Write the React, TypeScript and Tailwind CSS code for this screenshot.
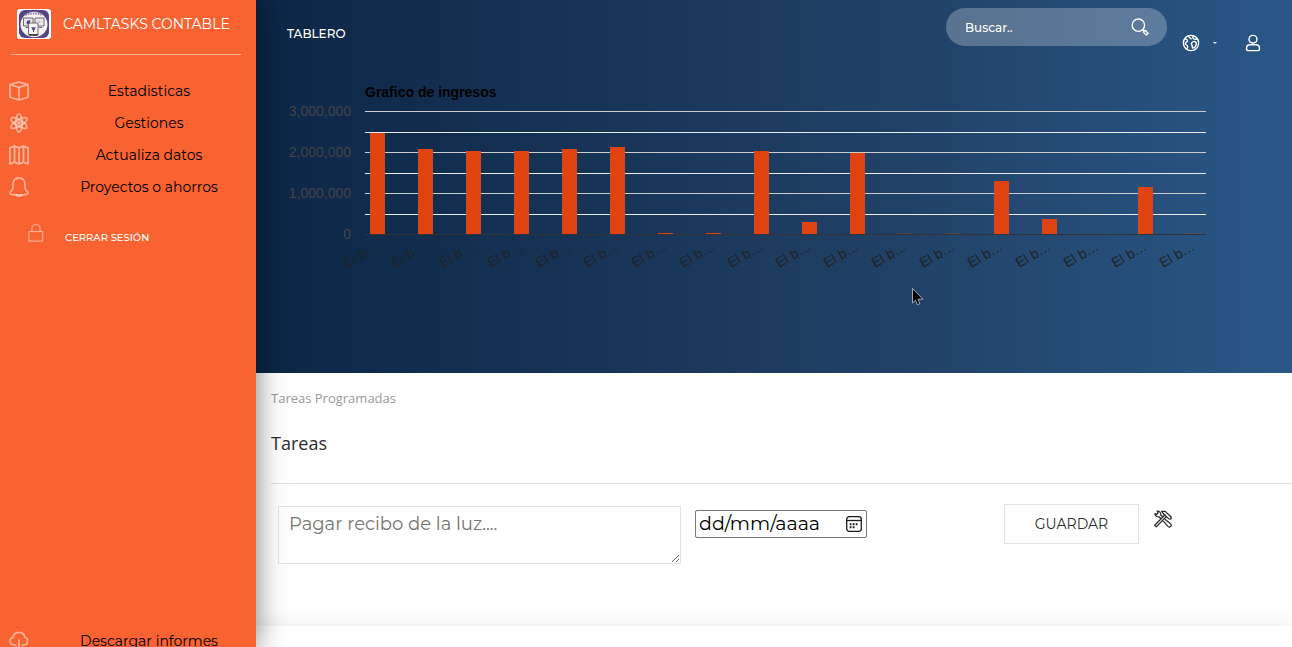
import type { ReactNode } from "react";

const incomes = [
  2460000, 2080000, 2030000, 2030000, 2080000, 2120000, 31000, 32000, 2030000,
  300000, 1970000, 18000, 18000, 1290000, 370000, 0, 1145000, 8000,
];

const gridLines = [
  { y: 111, color: "#cccccc" },
  { y: 132, color: "#ebebeb" },
  { y: 152, color: "#cccccc" },
  { y: 173, color: "#ebebeb" },
  { y: 193, color: "#cccccc" },
  { y: 214, color: "#ebebeb" },
];

const axisLabels = [
  { y: 116, label: "3,000,000" },
  { y: 157, label: "2,000,000" },
  { y: 198, label: "1,000,000" },
  { y: 239, label: "0" },
];

function Icon({ children, className, width = 1.7 }: { children: ReactNode; className: string; width?: number }) {
  return (
    <svg
      viewBox="0 0 20 20"
      className={className}
      fill="none"
      stroke="currentColor"
      strokeWidth={width}
      strokeLinecap="round"
      strokeLinejoin="round"
      aria-hidden="true"
    >
      {children}
    </svg>
  );
}

const BoxIcon = () => (
  <Icon className="size-5 shrink-0">
    <path d="M10 1 19 3.6v12.6L10 19 1 16.2V3.6L10 1ZM1 3.6l9 2.8 9-2.8M10 6.4V19" />
  </Icon>
);

const AtomIcon = () => (
  <Icon className="size-5 shrink-0" width={1.6}>
    <ellipse cx="10" cy="10" rx="3.2" ry="9.2" />
    <ellipse cx="10" cy="10" rx="3.2" ry="9.2" transform="rotate(60 10 10)" />
    <ellipse cx="10" cy="10" rx="3.2" ry="9.2" transform="rotate(-60 10 10)" />
    <circle cx="10" cy="10" r="1.2" />
  </Icon>
);

const MapIcon = () => (
  <Icon className="size-5 shrink-0" width={1.8}>
    <path d="m.9 2.8 4.600-1.800L10 2.800 14.500 1l4.600 1.800v16.200l-4.600-1.800-4.500 1.800-4.500-1.800-4.600 1.800V2.800ZM5.500 1v16.200M10 2.800v16.200M14.500 1v16.200" />
  </Icon>
);

const BellIcon = () => (
  <Icon className="size-5 shrink-0">
    <path d="M16 11V7a6 6 0 0 0-12 0v4c0 3.4-3.1 3.2-3.1 5.1 0 1.3 3.6 2 9.1 2s9.1-.7 9.1-2C19.1 14.2 16 14.4 16 11Z" transform="translate(0 -.2)" />
    <path d="M7.6 18c.2.800 1.200 1.300 2.400 1.300s2.200-.5 2.400-1.300" />
  </Icon>
);

const CloudIcon = () => (
  <Icon className="size-5 shrink-0">
    <path d="M6.500 14H4.600A3.800 3.800 0 0 1 4 6.500 6 6 0 0 1 15.800 6.200a4 4 0 0 1-.4 7.800h-1.900M10 9v10M7 16l3 3 3-3" />
  </Icon>
);

const links = [
  { label: "Estadisticas", icon: <BoxIcon /> },
  { label: "Gestiones", icon: <AtomIcon /> },
  { label: "Actualiza datos", icon: <MapIcon /> },
  { label: "Proyectos o ahorros", icon: <BellIcon /> },
];

function NavLink({ label, icon }: { label: string; icon: ReactNode }) {
  return (
    <a href="#" className="flex h-8 items-center pr-[15px] pl-[9px] text-sm text-black">
      <span className="text-white/50">{icon}</span>
      <span className="flex-1 pl-7 text-center">{label}</span>
    </a>
  );
}

function Logo() {
  return (
    <svg viewBox="0 0 34 30" className="h-[30px] w-[34px] shrink-0" aria-hidden="true">
      <rect width="34" height="30" rx="3" fill="#fff" />
      <rect x="2" y="1" width="30" height="28" rx="6" fill="#554383" />
      <ellipse cx="17" cy="15.500" rx="13.500" ry="12.800" fill="#f4f2f5" />
      <path d="M8.500 6c2.500-1.200 5.500-1.500 8.500-1.500s6 .3 8.500 1.500" fill="none" stroke="#8a7d9f" strokeWidth="2" strokeDasharray="1.500 1" />
      <g stroke="#6d6a70" fill="#e9e7eb">
        <path d="M6.500 9h9.500v8h-9.500zM18 9h9v8h-9zM9 18.500h3M22 18.500h3" />
        <rect x="11.500" y="14" width="9.500" height="12.500" rx="1" fill="#f7f7f7" />
      </g>
      <path d="m9.500 14 .5-2 3.500-1-1 3.500-2 1z" fill="#51407d" />
      <path d="M14.500 18h1l.5 1.500.5-2.500.5 2.500.5-1.500h1l-.5 2.500-1 .5v2h-1v-2l-1-.5z" fill="#51407d" />
      <path d="M21 12h3.500l-2 2H21z" fill="#c7bfdc" />
      <path d="M12 25h9v1.500h-9z" fill="#444" />
    </svg>
  );
}

function Sidebar() {
  return (
    <aside className="relative z-10 flex h-screen w-64 shrink-0 flex-col bg-[#f96332] shadow-[0_2px_22px_0_rgba(0,0,0,0.2),0_2px_30px_0_rgba(0,0,0,0.35)]">
      <a href="#" className="mr-[15px] ml-[11px] flex h-[55px] items-start gap-3 border-b border-white/50 pt-[9px] pl-1.5 whitespace-nowrap text-white">
        <Logo />
        <span className="text-sm leading-[30px]">CAMLTASKS CONTABLE</span>
      </a>
      <nav className="flex flex-1 flex-col pt-5">
        {links.map((link) => (
          <NavLink key={link.label} {...link} />
        ))}
        <a href="#" className="mt-4 flex h-8 items-center gap-5 pl-[27px] text-[10px] font-medium text-white">
          <Icon className="-mt-1 size-[18px] text-white/60" width={1}>
            <path d="M2.500 8.500h15v10.500h-15zM5.500 8.500V5a4.500 4.500 0 0 1 9 0v3.500" />
          </Icon>
          <span className="pt-1">CERRAR SESIÓN</span>
        </a>
        <div className="mt-auto -mb-2.5">
          <NavLink label="Descargar informes" icon={<CloudIcon />} />
        </div>
      </nav>
    </aside>
  );
}

function IncomeChart() {
  return (
    <svg viewBox="256 75 1036 205" className="block w-full font-['Liberation_Sans',Arial,sans-serif] text-sm" role="img" aria-label="Grafico de ingresos">
      <text x="365" y="97" fontWeight="bold" fill="#000">Grafico de ingresos</text>
      {gridLines.map((line) => (
        <rect key={line.y} x="365" y={line.y} width="841" height="1" fill={line.color} />
      ))}
      {axisLabels.map((axis) => (
        <text key={axis.label} x="351" y={axis.y} textAnchor="end" fill="#444444">{axis.label}</text>
      ))}
      {incomes.map((value, i) => {
        const height = value > 0 ? Math.max(1, Math.round((value / 3000000) * 123)) : 0;
        return (
          <g key={i}>
            <rect x={370 + i * 48} y={234 - height} width="15" height={height} fill="#df430f" opacity={value < 30000 ? 0.25 : 1} />
            <text textAnchor="end" fill="#222222" transform={`translate(${380 + i * 48} 249) rotate(-30)`}>El b…</text>
          </g>
        );
      })}
      <rect x="365" y="234" width="841" height="1" fill="#333333" />
    </svg>
  );
}

function Header() {
  return (
    <header className="relative h-[373px] bg-linear-to-r from-[#0c2646] via-[#204065] via-60% to-[#2a5788] text-white">
      <div className="flex h-[75px] items-start pr-[30px] pl-[31px]">
        <a href="#" className="mt-6 text-xs leading-5 font-medium">TABLERO</a>
        <form className="mt-2 ml-auto flex h-[38px] w-[221px] items-center rounded-full bg-white/25 pr-[18px] pl-[19px]">
          <input aria-label="Buscar" placeholder="Buscar.." className="min-w-0 flex-1 bg-transparent pt-0.5 text-xs font-medium outline-none placeholder:text-white" />
          <button type="button" aria-label="Buscar">
            <Icon className="size-[18px]" width={1.5}>
              <circle cx="8.200" cy="8" r="6.900" />
              <path d="m13.200 13 1.400 1.400M13.800 15.700l2-2 3.200 3.200-2 2z" />
            </Icon>
          </button>
        </form>
        <button type="button" aria-label="Idioma" className="mt-[34px] ml-[15px] flex items-center gap-[13px]">
          <Icon className="size-[18px]" width={1.6}>
            <circle cx="10" cy="10" r="8.500" />
            <path d="M3 5.500c1.800 0 3.200.8 3 2.300-.2 1.400-2.300 1.200-2.300 2.900 0 1.600 2.600 1.300 2.600 3.200 0 1.200-.6 1.900-.9 2.900M7.500 2c.2 2 1.300 3 2.600 3.300M12.300 2.200c-.5 1.500-.7 2.600.6 3.300 1.200.6 2.500.5 3.700.1M10.500 10.500c.4-2 3.500-2.900 4.900-1.400 1.100 1.200.5 2.500 0 3.700-.6 1.400-1.700 3.100-3.100 2.800-1.200-.2-.7-1.600-1-2.500-.3-.8-1-1.500-.8-2.600Z" />
          </Icon>
          <svg viewBox="0 0 4 2" className="h-0.5 w-1" aria-hidden="true"><path d="M0 0h4L2 2z" fill="currentColor" /></svg>
        </button>
        <button type="button" aria-label="Cuenta" className="mt-[34px] ml-[27px]">
          <Icon className="size-[18px]" width={1.6}>
            <rect x="5.600" y="1.500" width="8.800" height="8.500" rx="4.200" />
            <path d="M6.500 12h7c2.200 0 3.600 1.800 3.700 3.900.1 1.700-.5 2.600-2 2.600H4.800c-1.500 0-2.100-.9-2-2.600C2.900 13.800 4.300 12 6.500 12Z" />
          </Icon>
        </button>
      </div>
      <IncomeChart />
      <svg viewBox="0 0 12 18" className="absolute top-72 left-[656px] h-[18px] w-3" aria-hidden="true">
        <path d="M.5.500v14.500l3-2.800 2 4.500 2.400-1-2-4.500h5z" fill="#000" stroke="#fff" strokeWidth=".6" />
      </svg>
    </header>
  );
}

function TaskForm() {
  return (
    <form className="flex items-start pt-5 pl-[7px]">
      <textarea
        aria-label="Tarea"
        placeholder="Pagar recibo de la luz...."
        className="mt-0.5 h-[58px] w-[403px] shrink-0 resize border border-[#e3e3e3] bg-transparent px-2.5 py-1 text-lg leading-[26px] outline-none placeholder:text-[#757575]"
      />
      <div className="mt-1.5 ml-3.5 flex h-7 w-[172px] shrink-0 items-center rounded-xs border border-[#767676] bg-white pr-1 pl-[3px]">
        <input aria-label="Fecha" placeholder="dd/mm/aaaa" className="min-w-0 flex-1 text-[19px] leading-6 text-black outline-none placeholder:text-black" />
        <button type="button" aria-label="Abrir calendario">
          <svg viewBox="0 0 16 16" className="size-4" fill="none" stroke="#1a1a1a" strokeWidth="1.300" aria-hidden="true">
            <rect x=".7" y=".7" width="14.600" height="14.600" rx="2.500" />
            <path d="M1 4.500h14" />
            <path d="M6.700 8.300h1.800M9.700 8.300h1.800M3.700 8.300h1.800M3.700 11.300h1.800M6.700 11.300h1.800" strokeWidth="1.900" />
          </svg>
        </button>
      </div>
      <button type="button" className="ml-[137px] h-10 w-[135px] shrink-0 border border-[#e3e3e3] text-sm text-[#2c2c2c]">GUARDAR</button>
      <button type="button" aria-label="Herramientas" className="mt-1.5 ml-[15px] text-[#2c2c2c]">
        <Icon className="size-[18px]" width={1.4}>
          <path d="m7.500 9.500-2-2C3.500 8 1.300 6.500 1 4l2 .8 1.500-1.500L3.500 1.200c2.500-.2 4.300 2 4 4.300l2 2" />
          <path d="M8.500 1.500h4l6 5.700c.9.900.8 1.900.2 2.500s-1.700.6-2.500-.1l-5-4.600z" />
          <path d="m13.500 7.500-11 11.200L.8 17 12 5.500" />
          <path d="m12.500 10.500 5.800 4.700c2.300 2-.6 5-2.800 3l-5-5.500" />
        </Icon>
      </button>
    </form>
  );
}

export default function App() {
  return (
    <div className="flex h-screen overflow-hidden bg-white font-[Montserrat,Inter,sans-serif]">
      <Sidebar />
      <main className="min-w-0 flex-1">
        <Header />
        <section className="h-[253px] pl-[15px]">
          <div className="h-[111px] border-b border-[#e0e0e0] pt-[15px] font-['Open_Sans','Noto_Sans',sans-serif]">
            <p className="text-[13px] leading-5 text-[#9a9a9a]">Tareas Programadas</p>
            <h1 className="mt-[21px] text-lg leading-7 text-[#2c2c2c]">Tareas</h1>
          </div>
          <TaskForm />
        </section>
        <section aria-label="Tareas guardadas" className="h-20 bg-white shadow-[0_0_20px_rgba(0,0,0,0.1)]" />
      </main>
    </div>
  );
}
